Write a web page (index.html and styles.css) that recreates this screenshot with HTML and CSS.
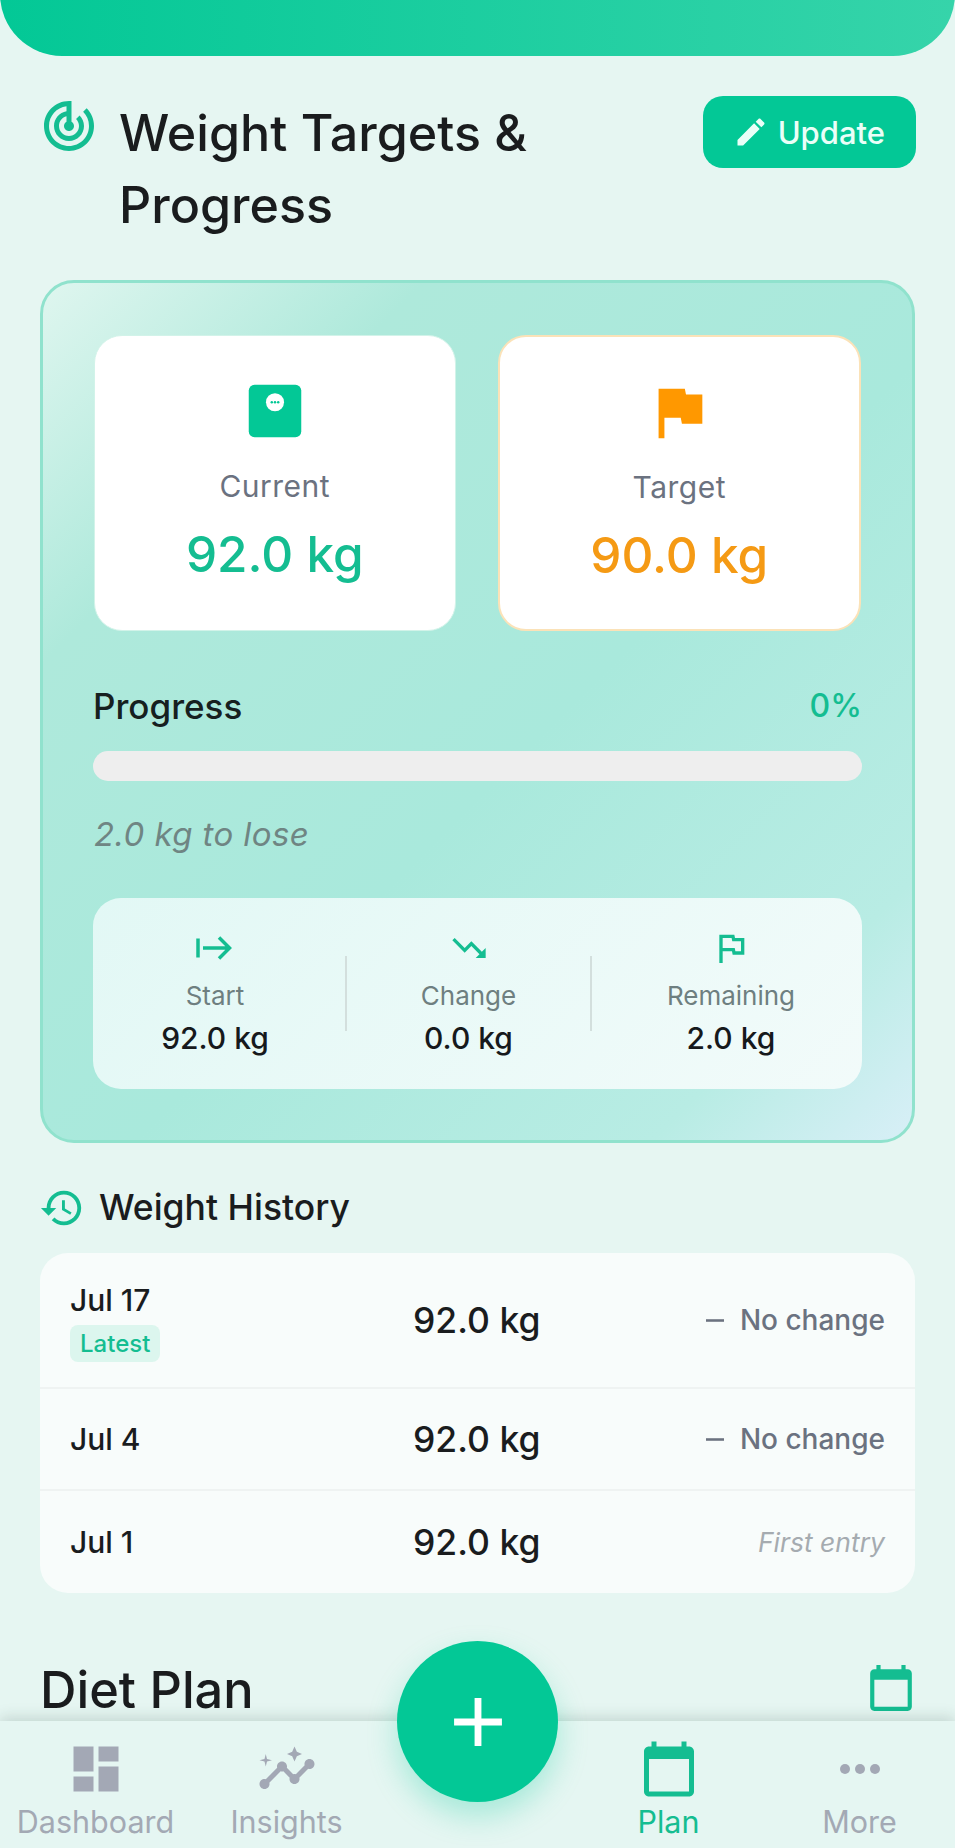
FILE: index.html
```html
<!DOCTYPE html>
<html lang="en">
<head>
<meta charset="utf-8">
<title>Weight Targets</title>
<link rel="stylesheet" href="styles.css">
</head>
<body>
<div class="screen">
  <div class="hero"></div>
  <section class="head">
    <svg class="head-icon" viewBox="0 0 24 24"><path d="M19.07 4.93l-1.41 1.41C19.1 7.79 20 9.79 20 12c0 4.42-3.58 8-8 8s-8-3.58-8-8c0-4.08 3.05-7.44 7-7.93v2.02C8.16 6.57 6 9.03 6 12c0 3.31 2.69 6 6 6s6-2.69 6-6c0-1.66-.67-3.16-1.76-4.24l-1.41 1.41C15.55 9.9 16 10.9 16 12c0 2.21-1.79 4-4 4s-4-1.79-4-4c0-1.86 1.28-3.41 3-3.86v2.14c-.6.35-1 .98-1 1.72 0 1.1.9 2 2 2s2-.9 2-2c0-.74-.4-1.38-1-1.72V2h-1C6.48 2 2 6.48 2 12s4.48 10 10 10 10-4.48 10-10c0-2.76-1.12-5.26-2.93-7.07z"/></svg>
    <h1 class="title">Weight Targets &amp; Progress</h1>
    <button class="update">
      <svg class="update-icon" viewBox="0 0 24 24"><path d="M3 17.25V21h3.75L17.81 9.94l-3.75-3.75L3 17.25zM20.71 7.04c.39-.39.39-1.02 0-1.41l-2.34-2.34c-.39-.39-1.02-.39-1.41 0l-1.83 1.83 3.75 3.75 1.83-1.83z"/></svg>
      Update
    </button>
  </section>

  <section class="panel">
    <div class="pair">
      <div class="tile">
        <svg class="tile-icon green" viewBox="0 0 24 24"><path d="M5 3h14a2 2 0 0 1 2 2v14a2 2 0 0 1-2 2H5a2 2 0 0 1-2-2V5a2 2 0 0 1 2-2z"/><circle cx="12" cy="9" r="3.1" fill="#fff"/><circle cx="10.9" cy="9" r=".42"/><circle cx="12" cy="9" r=".42"/><circle cx="13.1" cy="9" r=".42"/></svg>
        <div class="tile-label">Current</div>
        <div class="tile-value green-text">92.0 kg</div>
      </div>
      <div class="tile tile-target">
        <svg class="tile-icon orange" viewBox="0 0 24 24"><path d="M14.4 6L14 4H5v17h2v-7h5.6l.4 2h7V6z"/></svg>
        <div class="tile-label">Target</div>
        <div class="tile-value orange-text">90.0 kg</div>
      </div>
    </div>
    <div class="progress-row"><span>Progress</span><span class="pct">0%</span></div>
    <div class="bar"></div>
    <div class="to-lose">2.0 kg to lose</div>
    <div class="stats">
      <div class="stat stat-a">
        <svg class="stat-icon" viewBox="0 0 40 40"><path class="line" d="M3 10.500v19M8 20h26M24 9.500l10.500 10.500-10.500 10.500"/></svg>
        <div class="stat-label">Start</div>
        <div class="stat-value">92.0 kg</div>
      </div>
      <div class="rule rule-a"></div>
      <div class="stat stat-b">
        <svg class="stat-icon" viewBox="0 0 24 24"><path d="M16 18l2.29-2.29-4.88-4.88-4 4L2 7.41 3.41 6l6 6 4-4 6.3 6.29L22 12v6z"/></svg>
        <div class="stat-label">Change</div>
        <div class="stat-value">0.0 kg</div>
      </div>
      <div class="rule"></div>
      <div class="stat stat-c">
        <svg class="stat-icon" viewBox="0 0 24 24"><path d="M12.36 6l.4 2H18v6h-3.360l-.4-2H7V6h5.360M14 4H5v17h2v-7h5.600l.4 2h7V6h-5.600L14 4z"/></svg>
        <div class="stat-label">Remaining</div>
        <div class="stat-value">2.0 kg</div>
      </div>
    </div>
  </section>

  <section class="history-head">
    <svg class="history-icon" viewBox="0 0 24 24"><path d="M13 3c-4.970 0-9 4.030-9 9H1l3.890 3.890.07.14L9 12H6c0-3.870 3.130-7 7-7s7 3.130 7 7-3.130 7-7 7c-1.930 0-3.680-.79-4.940-2.060l-1.420 1.420C8.270 19.990 10.510 21 13 21c4.970 0 9-4.030 9-9s-4.030-9-9-9zm-1 5v5l4.280 2.540.72-1.210-3.500-2.080V8H12z"/></svg>
    <h2 class="history-title">Weight History</h2>
  </section>

  <section class="list">
    <div class="row row-first">
      <div class="date"><div class="date-top">Jul 17</div><span class="chip">Latest</span></div>
      <div class="weight">92.0 kg</div>
      <div class="delta"><svg class="dash" viewBox="5 11 14 2"><path d="M19 13H5v-2h14v2z"/></svg>No change</div>
    </div>
    <div class="row">
      <div class="date">Jul 4</div>
      <div class="weight">92.0 kg</div>
      <div class="delta"><svg class="dash" viewBox="5 11 14 2"><path d="M19 13H5v-2h14v2z"/></svg>No change</div>
    </div>
    <div class="row row-last">
      <div class="date">Jul 1</div>
      <div class="weight">92.0 kg</div>
      <div class="delta first">First entry</div>
    </div>
  </section>

  <section class="diet">
    <h2 class="diet-title">Diet Plan</h2>
    <svg class="diet-icon" viewBox="0 0 24 24"><path d="M20 3h-1V1h-2v2H7V1H5v2H4c-1.100 0-2 .9-2 2v16c0 1.100.9 2 2 2h16c1.100 0 2-.9 2-2V5c0-1.100-.9-2-2-2zm0 18H4V8h16v13z"/></svg>
  </section>

  <nav class="nav">
    <div class="nav-item">
      <svg class="nav-icon" viewBox="0 0 24 24"><path d="M3 13h8V3H3v10zm0 8h8v-6H3v6zm10 0h8V11h-8v10zm0-18v6h8V3h-8z"/></svg>
      <span>Dashboard</span>
    </div>
    <div class="nav-item">
      <svg class="nav-icon" viewBox="0 0 24 24"><path d="M21 8c-1.450 0-2.260 1.440-1.930 2.510l-3.550 3.560c-.3-.09-.74-.09-1.040 0l-2.550-2.550C12.270 10.450 11.460 9 10 9c-1.450 0-2.270 1.440-1.930 2.520l-4.560 4.550C2.440 15.740 1 16.550 1 18c0 1.100.9 2 2 2 1.450 0 2.260-1.440 1.930-2.510l4.550-4.560c.3.09.74.09 1.040 0l2.550 2.550C12.730 16.550 13.540 18 15 18c1.450 0 2.270-1.440 1.930-2.520l3.560-3.550c1.070.33 2.510-.48 2.510-1.930 0-1.100-.9-2-2-2z"/><path d="M15 9l.94-2.070L18 6l-2.060-.93L15 3l-.92 2.070L12 6l2.080.93zM3.500 11L4 9l2-.5L4 8l-.5-2L3 8l-2 .5L3 9z"/></svg>
      <span>Insights</span>
    </div>
    <div class="nav-item"></div>
    <div class="nav-item active">
      <svg class="nav-icon" viewBox="0 0 24 24"><path d="M20 3h-1V1h-2v2H7V1H5v2H4c-1.100 0-2 .9-2 2v16c0 1.100.9 2 2 2h16c1.100 0 2-.9 2-2V5c0-1.100-.9-2-2-2zm0 18H4V8h16v13z"/></svg>
      <span>Plan</span>
    </div>
    <div class="nav-item">
      <svg class="nav-icon" viewBox="0 0 24 24"><circle cx="6" cy="12" r="2"/><circle cx="12" cy="12" r="2"/><circle cx="18" cy="12" r="2"/></svg>
      <span>More</span>
    </div>
  </nav>
  <button class="fab"><svg class="fab-icon" viewBox="0 0 24 24"><path d="M19 13h-6v6h-2v-6H5v-2h6V5h2v6h6v2z"/></svg></button>
</div>
</body>
</html>
```
FILE: styles.css
```css
* { box-sizing: border-box; }
html, body { margin: 0; padding: 0; }
body { background: #e6f6f2; font-family: Inter, "Noto Sans", sans-serif; color: #1a1c1e; }
svg { display: block; fill: currentColor; flex: none; }
h1, h2 { margin: 0; font-weight: 500; }

.screen { position: relative; width: 955px; height: 1848px; overflow: hidden; background: #e6f6f2; }

.hero { height: 70px; margin-top: -14px; border-radius: 0 0 62px 62px; background: linear-gradient(90deg, #03c896, #36d4aa); }

.head { display: flex; align-items: flex-start; padding: 40px 39px 0 40px; height: 224px; }
.head-icon { width: 60px; height: 60px; margin: 0 0 0 -1px; color: #14bd91; }
.title { width: 470px; margin: 1px 0 0 20px; font-size: 50.2px; line-height: 72px; font-weight: 500; }
.update { display: flex; align-items: center; gap: 9px; height: 72px; margin-left: auto; padding: 0 31px 0 30px; border: 0; border-radius: 20px; background: #03c896; color: #eafff8; font: 500 31px Inter, sans-serif; }
.update-icon { width: 36px; height: 36px; }

.panel { height: 863px; margin: 0 40px; padding: 52px 50px 0; border: 3px solid #90e2cd; border-radius: 34px; background: linear-gradient(135deg, #dff6ef 0%, #aee9db 22%, #a9e9dc 55%, #b8ece4 85%, #d8eff7 100%); }
.pair { display: flex; justify-content: space-between; gap: 42px; margin: 0 1px; }
.tile { flex: 1; display: flex; flex-direction: column; align-items: center; height: 296px; padding-top: 40px; background: #fff; border: 1px solid #d2f3e9; border-radius: 28px; }
.tile-target { border: 2px solid #fbe2b8; }
.tile-icon { width: 70px; height: 70px; }
.green { color: #03c896; }
.orange { color: #ff9800; }
.tile-label { margin-top: 22px; font-size: 30px; letter-spacing: .5px; line-height: 36px; color: #6b7280; }
.tile-value { margin-top: 19px; font-size: 49.5px; line-height: 62px; font-weight: 500; }
.green-text { color: #14bd91; }
.orange-text { color: #f59a14; }

.progress-row { display: flex; justify-content: space-between; margin-top: 54px; font-size: 35px; line-height: 42px; font-weight: 500; color: #16201f; }
.pct { color: #14bd91; font-size: 32px; }
.bar { height: 30px; margin-top: 24px; border-radius: 15px; background: #eeeeee; }
.to-lose { margin-top: 33px; margin-left: 1px; font-size: 33px; letter-spacing: .4px; line-height: 40px; font-style: italic; color: #6f8583; }

.stats { display: flex; align-items: flex-start; height: 191px; margin-top: 44px; padding-top: 30px; border-radius: 28px; background: linear-gradient(135deg, #e2f8f5, #f2fbfa); }
.stat { display: flex; flex-direction: column; align-items: center; }
.stat-a { flex: 0 0 244px; }
.stat-b { flex: 0 0 243px; }
.stat-c { flex: 1; padding-left: 8px; }
.stat-icon { width: 40px; height: 40px; color: #14bd91; }
.line { fill: none; stroke: currentColor; stroke-width: 3.500; }
.stat-label { margin-top: 11px; font-size: 26px; line-height: 34px; color: #6e7f80; }
.stat-value { margin-top: 7px; font-size: 30px; line-height: 36px; font-weight: 500; color: #16191c; }
.rule { width: 2px; height: 75px; margin-top: 28px; background: #d3dfdd; }
.rule-a { margin-left: 8px; }

.history-head { display: flex; align-items: center; gap: 14px; height: 42px; margin: 44px 40px 0 39px; }
.history-icon { width: 46px; height: 46px; color: #14bd91; }
.history-title { font-size: 35.5px; line-height: 42px; font-weight: 500; }

.list { margin: 24px 40px 0; border-radius: 28px; background: #f8fcfb; }
.row { display: flex; align-items: center; height: 102px; padding: 0 30px; border-top: 2px solid #eff3f2; }
.row-first { height: 134px; border-top: 0; }
.row-last { height: 104px; }
.date { flex: 0 0 343px; font-size: 30px; line-height: 38px; font-weight: 500; }
.date-top { padding-top: 3px; }
.chip { display: inline-block; margin-top: 6px; padding: 0 10px; height: 37px; border-radius: 8px; background: #dcf6ee; color: #14bd91; font-size: 24px; line-height: 37px; }
.weight { flex: none; font-size: 35.5px; font-weight: 500; }
.delta { display: flex; align-items: center; margin-left: auto; font-size: 28px; font-weight: 500; color: #6b7280; }
.dash { width: 18px; height: 3px; margin-right: 16px; }
.first { font-size: 26.5px; font-weight: 400; font-style: italic; color: #a5abb0; }

.diet { display: flex; justify-content: space-between; align-items: center; margin: 67px 39px 0 40px; height: 60px; }
.diet-title { font-size: 50.5px; font-weight: 500; line-height: 60px; color: #1a1c1e; }
.diet-icon { width: 50px; height: 50px; margin-top: -4px; color: #14bd91; }

.nav { position: absolute; left: 0; right: 0; bottom: 0; display: grid; grid-template-columns: repeat(5, 1fr); height: 127px; background: #e5f6f2; box-shadow: 0 -3px 14px rgba(30, 60, 50, .18); }
.nav-item { display: flex; flex-direction: column; align-items: center; padding-top: 18px; font-size: 30.5px; line-height: 36px; color: #a3a9b4; }
.nav-item span { margin-top: 5px; }
.nav-icon { width: 60px; height: 60px; color: #a3a8b5; }
.active, .active .nav-icon { color: #14bd91; }
.fab { position: absolute; left: 397px; top: 1641px; display: flex; align-items: center; justify-content: center; width: 161px; height: 161px; padding: 0; border: 0; border-radius: 50%; background: #03c896; box-shadow: 0 14px 30px rgba(3, 200, 150, .28); }
.fab-icon { width: 82px; height: 82px; color: #fff; }
```
